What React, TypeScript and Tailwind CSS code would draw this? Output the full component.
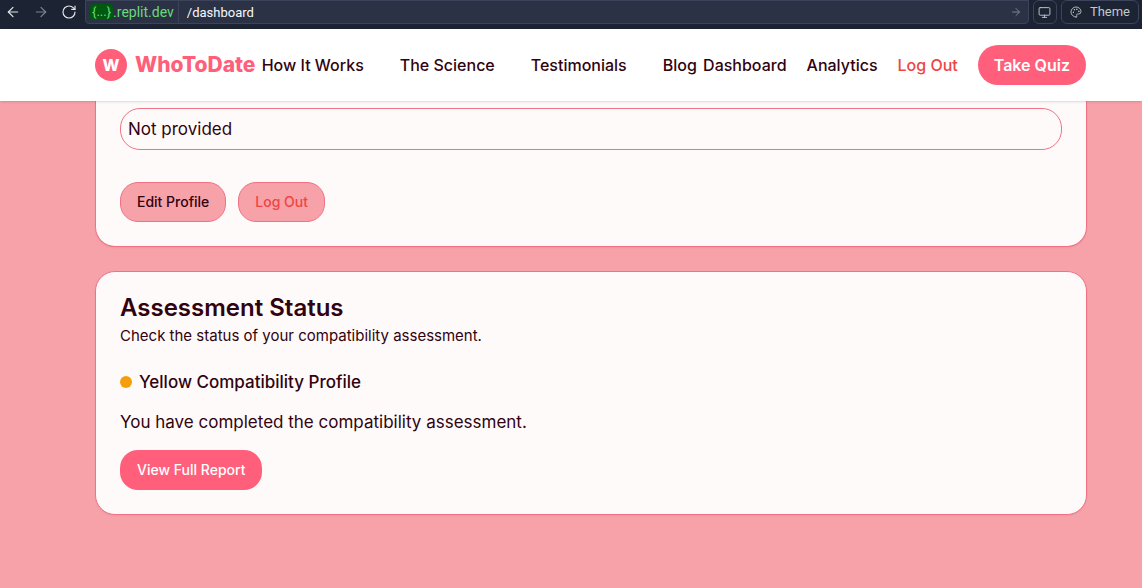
import { ArrowLeft, ArrowRight, Monitor, Palette, RotateCw } from "lucide-react";

const sectionLinks = ["How It Works", "The Science", "Testimonials", "Blog"];

function BrowserBar() {
  return (
    <div className="flex h-[29px] items-start bg-[#1c2333] pr-[3px] font-['Roboto',sans-serif] text-[13px] text-[#c2c8cc]">
      <div className="flex h-6 items-center gap-3 pr-2 pl-[5px]">
        <button aria-label="Back" className="text-[#e4e6ea]">
          <ArrowLeft size={16} strokeWidth={1.75} />
        </button>
        <button aria-label="Forward" className="text-[#7d8490]">
          <ArrowRight size={16} strokeWidth={1.75} />
        </button>
        <button aria-label="Reload" className="text-[#e4e6ea]">
          <RotateCw size={16} strokeWidth={1.75} />
        </button>
      </div>
      <div className="flex h-6 flex-1 items-center rounded-b border border-[#3c445c] bg-[#2b3245] pr-1.5 pl-1">
        <span className="rounded bg-[#00590e] px-0.5 leading-4 text-[#6bd97b]">{"{...}"}</span>
        <span className="pr-1 text-sm text-[#6bd97b]">.replit.dev</span>
        <input
          aria-label="Page path"
          defaultValue="/dashboard"
          className="h-full min-w-0 flex-1 border-l border-[#3c445c] bg-transparent pl-2 text-[#f5f9fc] outline-none"
        />
        <button aria-label="Go" className="text-[#7d8490]">
          <ArrowRight size={12} strokeWidth={2} />
        </button>
      </div>
      <button
        aria-label="Device size"
        className="ml-1 flex h-6 w-6 items-center justify-center rounded-md border border-[#3c445c]"
      >
        <Monitor size={13} strokeWidth={1.75} />
      </button>
      <button className="ml-1 flex h-6 items-center gap-2 rounded-md border border-[#3c445c] px-2">
        <Palette size={12} strokeWidth={1.75} />
        Theme
      </button>
    </div>
  );
}

function SiteHeader() {
  return (
    <header className="relative z-10 bg-white shadow-sm">
      <div className="mr-14 ml-[95px] flex h-[72px] items-center justify-between whitespace-nowrap">
        <a href="#home" className="flex items-center gap-2">
          <span className="flex h-8 w-8 items-center justify-center rounded-full bg-[#ff5f7a] text-base font-extrabold text-white">
            W
          </span>
          <span className="text-[21px] leading-7 font-extrabold text-[#ff5f7a]">WhoToDate</span>
        </a>
        <nav className="flex gap-9 font-medium">
          {sectionLinks.map((label) => (
            <a key={label} href="#section">
              {label}
            </a>
          ))}
        </nav>
        <div className="flex items-center gap-5 font-medium">
          <a href="#dashboard">Dashboard</a>
          <a href="#analytics">Analytics</a>
          <button className="text-[#ef4444]">Log Out</button>
          <a href="#quiz" className="rounded-[20px] bg-[#ff5f7a] px-4 py-2 font-semibold text-white">
            Take Quiz
          </a>
        </div>
      </div>
    </header>
  );
}

export default function App() {
  return (
    <div className="flex min-h-screen flex-col bg-[#f7a1a8] font-['Inter',sans-serif] text-base text-[#30030f]">
      <BrowserBar />
      <SiteHeader />
      <main className="mr-[55px] ml-[95px] flex flex-col gap-6">
        <section className="rounded-b-[20px] border border-t-0 border-[#ee7387] bg-[#fffafa] px-6 pt-[7px] pb-6 shadow-xs">
          <div className="rounded-[20px] border border-[#ee7387] px-[7px] py-2 text-[17px] leading-6">Not provided</div>
          <div className="mt-8 flex gap-3 text-sm font-medium">
            <button className="h-10 rounded-[18px] border border-[#ee7387] bg-[#f7a1a8] px-4">Edit Profile</button>
            <button className="h-10 rounded-[18px] border border-[#ee7387] bg-[#f7a1a8] px-4 text-[#ef4444]">
              Log Out
            </button>
          </div>
        </section>
        <section className="rounded-[20px] border border-[#ee7387] bg-[#fffafa] p-6 shadow-xs">
          <h2 className="text-2xl leading-6 font-semibold">Assessment Status</h2>
          <p className="mt-1.5 text-[15px] leading-5">Check the status of your compatibility assessment.</p>
          <div className="mt-6 flex items-center gap-[7px] text-[17px] leading-6 font-medium">
            <span className="h-3 w-3 rounded-full bg-[#f59e0b]" />
            Yellow Compatibility Profile
          </div>
          <p className="mt-4 text-[17px] leading-6">You have completed the compatibility assessment.</p>
          <button className="mt-4 h-10 rounded-[18px] bg-[#ff5f7a] px-[17px] text-sm font-medium text-white">
            View Full Report
          </button>
        </section>
      </main>
    </div>
  );
}
